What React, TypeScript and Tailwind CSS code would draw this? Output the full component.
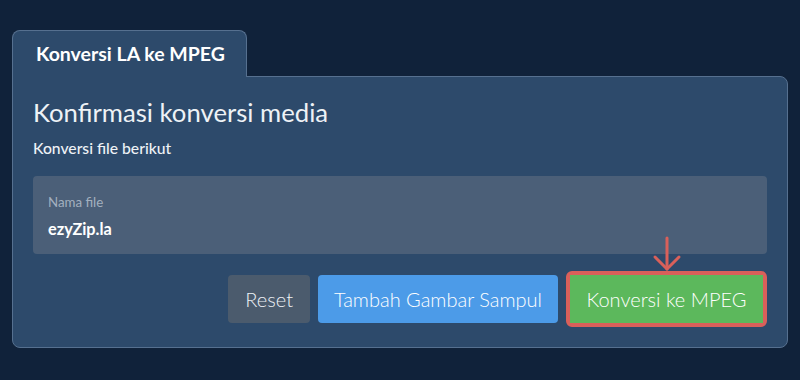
import React from 'react';

const App: React.FC = () => {
  return (
    <div
      className="w-[800px] h-[380px] bg-[#10223a] px-3 pt-[30px] text-white"
      style={{ fontFamily: 'Lato, "Open Sans", sans-serif' }}
    >
      {/* Tab */}
      <div className="relative z-10 -mb-px flex h-[47px] w-[235px] items-start rounded-t-lg border border-b-0 border-[#56708f] bg-[#2d4a6b] pl-[23px] pt-[11px]">
        <span className="text-[19.5px] font-bold leading-6 text-white">Konversi LA ke MPEG</span>
      </div>

      {/* Card */}
      <div className="rounded-b-lg rounded-tr-lg border border-[#56708f] bg-[#2d4a6b] px-5 pb-5 pt-[19px]">
        <h1 className="text-[25.7px] font-normal leading-8 text-[#eef2f6]">Konfirmasi konversi media</h1>
        <p className="mt-2 text-[15.7px] font-medium leading-6 text-[#eef2f6]">Konversi file berikut</p>

        <div className="mt-4 h-[78px] rounded bg-[#4b5f78] px-[15px] pt-4">
          <div className="text-[13.3px] leading-5 text-[#a3b0bf]">Nama file</div>
          <div className="mt-[5px] text-[16.3px] font-bold leading-6 text-white">ezyZip.la</div>
        </div>

        <div className="mt-[17px] flex h-14 items-center justify-end gap-2">
          <button className="h-12 rounded bg-[#4b5b6d] px-[17px] text-[20px] font-light text-[#eef2f6]">
            Reset
          </button>
          <button className="h-12 w-[240px] rounded bg-[#4c9be8] text-[20px] font-light text-white">
            Tambah Gambar Sampul
          </button>
          <div className="relative rounded-md border-4 border-[#d9605a]">
            <svg
              className="absolute left-1/2 top-[-39px] -translate-x-1/2"
              width="30"
              height="36"
              viewBox="0 0 30 36"
              fill="none"
              stroke="#d9605a"
              strokeWidth="3"
              strokeLinecap="round"
              strokeLinejoin="round"
            >
              <line x1="15" y1="2" x2="15" y2="33" />
              <polyline points="3,21 15,33 27,21" />
            </svg>
            <button className="h-12 w-[193px] bg-[#5cb85c] text-[20px] font-light text-white">
              Konversi ke MPEG
            </button>
          </div>
        </div>
      </div>
    </div>
  );
};

export default App;
